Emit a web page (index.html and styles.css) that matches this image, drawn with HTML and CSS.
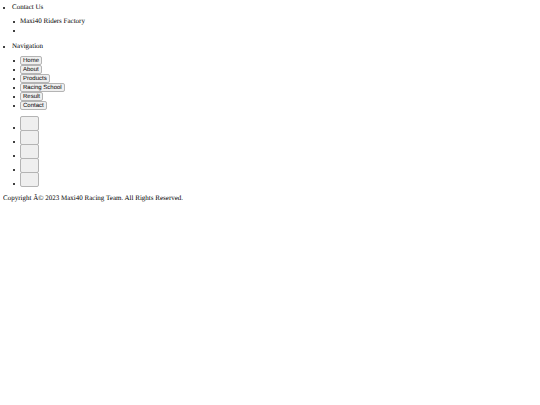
FILE: index.html
```
<!DOCTYPE html>
<html lang="en">
<head>
    <meta charset="utf-8">
    <title>Maxi40 Racing Team</title>
    <meta name="viewport" content="width=device-width, initial-scale=1.0">
    <link rel="stylesheet" href="styles.css">
</head>
<body>
    <footer class="footer">
        <section class="footer-block">
            <h2 class="footer-title">Contact Us</h2>
            <ul class="footer-list contact-list">
                <li>Maxi40 Riders Factory</li>
                <li></li>
            </ul>
        </section>

        <section class="footer-block">
            <h2 class="footer-title">Navigation</h2>
            <ul class="footer-list nav-list">
                <li><button type="button">Home</button></li>
                <li><button type="button">About</button></li>
                <li><button type="button">Products</button></li>
                <li><button type="button">Racing School</button></li>
                <li><button type="button">Result</button></li>
                <li><button type="button">Contact</button></li>
            </ul>
        </section>

        <!-- Social buttons -->
        <ul class="footer-list social-list">
            <li><button type="button"></button></li>
            <li><button type="button"></button></li>
            <li><button type="button"></button></li>
            <li><button type="button"></button></li>
            <li><button type="button"></button></li>
        </ul>

        <p class="copyright">Copyright Â© 2023 Maxi40 Racing Team. All Rights Reserved.</p>
    </footer>
</body>
</html>
```

FILE: styles.css
```
body {
    margin: 3px;
    background: #fff;
    color: #000;
    font-family: "Liberation Serif", "Times New Roman", serif;
    font-size: 7px;
    line-height: 9px;
    text-rendering: geometricPrecision;
}

.footer-block {
    margin-bottom: 7px;
}

.footer-title {
    display: flex;
    align-items: center;
    gap: 7px;
    margin: 0 0 5px;
    font-size: 7px;
    font-weight: normal;
}

.footer-list {
    margin: 0;
    padding-left: 10px;
    list-style: none;
}

.footer-list li {
    display: flex;
    align-items: center;
    gap: 5px;
    height: 9px;
}

/* Round bullets */
.footer-title::before,
.footer-list li::before {
    content: "";
    width: 2px;
    height: 2px;
    border-radius: 50%;
    background: #000;
}

button {
    box-sizing: border-box;
    height: 9px;
    margin: 0;
    padding: 1px 2px 0;
    border: 1px solid #b4b4b4;
    border-radius: 2px;
    background: #efefef;
    color: #000;
    font-family: "Liberation Sans", Arial, sans-serif;
    font-size: 6px;
    line-height: 7px;
    text-rendering: geometricPrecision;
}

.social-list li {
    align-items: flex-end;
    height: 14px;
}

.social-list li::before {
    margin-bottom: 2px;
}

.social-list button {
    width: 19px;
    height: 15px;
}

.copyright {
    margin: 7px 0 0;
}
```
